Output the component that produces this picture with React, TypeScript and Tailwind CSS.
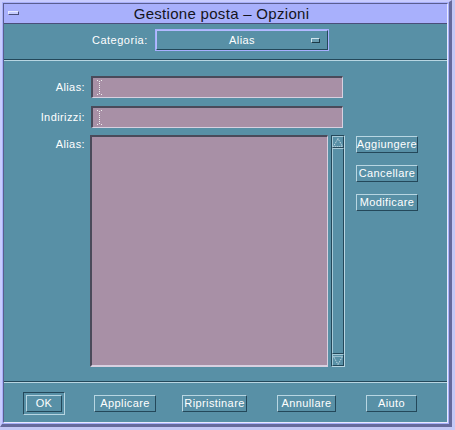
import React from "react";

const font = { fontFamily: '"Liberation Sans", "DejaVu Sans", sans-serif' };

// raised motif-style push button
const Btn = ({ label, w }: { label: string; w: string }) => (
  <div
    className={`${w} h-[17px] flex items-center justify-center border border-t-[#b8d6e2] border-l-[#b8d6e2] border-b-[#24485a] border-r-[#24485a] text-[11px] text-white tracking-[0.4px]`}
  >
    {label}
  </div>
);

const Cursor = () => (
  <svg width="5" height="15" viewBox="0 0 5 15" className="ml-[3px]">
    <g fill="#eeeeee">
      <rect x="0" y="0" width="1" height="1" />
      <rect x="4" y="0" width="1" height="1" />
      <rect x="2" y="1" width="1" height="1" />
      <rect x="2" y="3" width="1" height="1" />
      <rect x="2" y="5" width="1" height="1" />
      <rect x="2" y="7" width="1" height="1" />
      <rect x="2" y="9" width="1" height="1" />
      <rect x="2" y="11" width="1" height="1" />
      <rect x="2" y="13" width="1" height="1" />
      <rect x="0" y="14" width="1" height="1" />
      <rect x="4" y="14" width="1" height="1" />
    </g>
  </svg>
);

const Field = () => (
  <div className="w-[252px] h-[22px] bg-[#a890a6] border-t-2 border-l-2 border-[#4a4a5a] border-b border-r border-b-[#d8d0e0] border-r-[#d8d0e0] flex items-center pl-[1px]">
    <Cursor />
  </div>
);

const Arrow = ({ up }: { up?: boolean }) => (
  <div className="h-[12px] w-full border border-t-[#a8cbd8] border-l-[#a8cbd8] border-b-[#24485a] border-r-[#24485a] flex items-center justify-center">
    <svg width="10" height="9" viewBox="0 0 10 9">
      {up ? (
        <path d="M5 0.5 L9.5 8.5 L0.5 8.5 Z" fill="none" stroke="#d8e8f0" strokeWidth="1" strokeDasharray="1 1" />
      ) : (
        <path d="M0.5 0.5 L9.5 0.5 L5 8.5 Z" fill="none" stroke="#d8e8f0" strokeWidth="1" strokeDasharray="1 1" />
      )}
    </svg>
  </div>
);

export default function App() {
  return (
    <div className="w-[455px] h-[430px] bg-[#c4c8f6]" style={font}>
      <div className="w-[452px] h-[427px] bg-[#a8b0fa] border-l-2 border-t-2 border-[#c8ccff] border-r-[3px] border-b-[3px] border-r-[#666a9c] border-b-[#666a9c] p-[1px] flex flex-col">
        <div className="flex-1 flex flex-col border border-t-[#5a5e90] border-l-[#5a5e90] border-b-[#e8eaff] border-r-[#e8eaff]">
          {/* title bar */}
          <div className="h-[20px] bg-[#a8b0fc] border-b border-[#4a4e7a] flex items-center relative">
            <div className="absolute left-[4px] top-[7px] w-[11px] h-[4px] bg-[#c6ccff] border-r border-b border-[#4a4e7a] border-t border-l border-t-[#e8eaff] border-l-[#e8eaff]" />
            <div className="flex-1 text-center text-[15px] text-[#141420] leading-none pr-[8px] tracking-[0.3px]">Gestione posta – Opzioni</div>
          </div>
          {/* body */}
          <div className="flex-1 bg-[#5890a6] flex flex-col">
            <div className="flex items-center h-[20px] mt-[6px] pl-[88px]">
              <span className="w-[55px] text-right text-[11px] text-white tracking-[0.5px]">Categoria:</span>
              <div className="ml-[9px] w-[172px] h-[20px] border border-t-[#b4baff] border-l-[#b4baff] border-b-[#24485a] border-r-[#24485a] outline outline-1 outline-[#a8b0ff] flex items-center relative">
                <span className="flex-1 text-center text-[11px] text-white tracking-[0.4px]">Alias</span>
                <div className="absolute right-[7px] top-[7px] w-[9px] h-[5px] bg-[#6a9cb0] border border-t-[#d0e4ec] border-l-[#d0e4ec] border-b-[#1c3a48] border-r-[#1c3a48]" />
              </div>
            </div>
            <div className="mt-[9px] h-[2px] border-t border-[#24485a] border-b border-b-[#b8d6e2]" />
            {/* form */}
            <div className="flex flex-col gap-[8px] mt-[15px]">
              <div className="flex items-center">
                <span className="w-[81px] text-right text-[11px] text-white tracking-[0.4px]">Alias:</span>
                <div className="ml-[6px]"><Field /></div>
              </div>
              <div className="flex items-center">
                <span className="w-[81px] text-right text-[11px] text-white tracking-[0.4px]">Indirizzi:</span>
                <div className="ml-[6px]"><Field /></div>
              </div>
            </div>
            <div className="flex mt-[7px]">
              <span className="w-[81px] text-right text-[11px] text-white pt-[1px] tracking-[0.4px]">Alias:</span>
              <div className="ml-[5px] w-[238px] h-[232px] bg-[#a890a6] border-t-2 border-l-2 border-[#4a4a5a] border-b-2 border-r border-b-[#d8d0e0] border-r-[#d8d0e0]" />
              <div className="ml-[3px] w-[14px] h-[232px] flex flex-col border-l border-t border-[#24485a] border-r border-b border-r-[#b8d6e2] border-b-[#b8d6e2]">
                <Arrow up />
                <div className="flex-1 border border-t-[#a8cbd8] border-l-[#a8cbd8] border-b-[#24485a] border-r-[#24485a]" />
                <Arrow />
              </div>
              <div className="ml-[11px] flex flex-col gap-[12px] pt-[1px]">
                <Btn label="Aggiungere" w="w-[62px]" />
                <Btn label="Cancellare" w="w-[62px]" />
                <Btn label="Modificare" w="w-[62px]" />
              </div>
            </div>
            <div className="mt-[14px] h-[2px] border-t border-[#24485a] border-b border-b-[#b8d6e2]" />
            {/* bottom buttons */}
            <div className="flex items-center pl-[19px] mt-[9px]">
              <div className="w-[42px] h-[23px] border border-t-[#24485a] border-l-[#24485a] border-b-[#b8d6e2] border-r-[#b8d6e2] flex items-center justify-center">
                <Btn label="OK" w="w-[36px]" />
              </div>
              <div className="ml-[29px]"><Btn label="Applicare" w="w-[62px]" /></div>
              <div className="ml-[26px]"><Btn label="Ripristinare" w="w-[65px]" /></div>
              <div className="ml-[30px]"><Btn label="Annullare" w="w-[59px]" /></div>
              <div className="ml-[30px]"><Btn label="Aiuto" w="w-[51px]" /></div>
            </div>
          </div>
        </div>
      </div>
    </div>
  );
}
